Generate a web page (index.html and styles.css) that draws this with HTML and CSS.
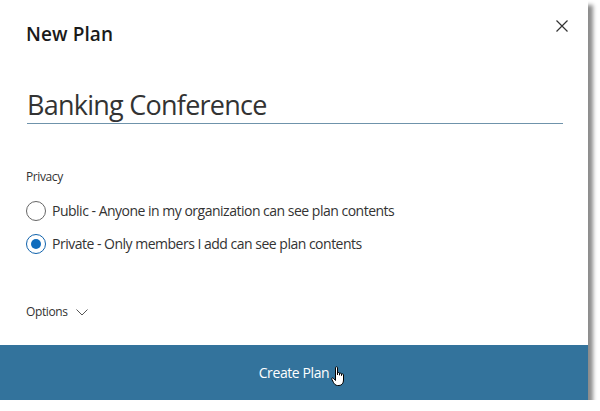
FILE: index.html
```html
<!DOCTYPE html>
<html>
<head>
<meta charset="utf-8">
<link rel="stylesheet" href="styles.css">
</head>
<body>
<div class="dialog">
  <div class="body">
    <div class="header">
      <h1 class="title">New Plan</h1>
      <button class="close" aria-label="Close">
        <svg width="12" height="12" viewBox="0 0 12 12"><path d="M0.5 0.5 L11.5 11.5 M11.5 0.5 L0.5 11.5" stroke="#333" stroke-width="1.2" fill="none"/></svg>
      </button>
    </div>
    <div class="name-field">Banking Conference</div>
    <div class="label">Privacy</div>
    <div class="radios">
      <label class="radio"><span class="circle"></span><span>Public - Anyone in my organization can see plan contents</span></label>
      <label class="radio"><span class="circle checked"></span><span>Private - Only members I add can see plan contents</span></label>
    </div>
    <div class="options">Options
      <svg class="chev" width="12" height="7" viewBox="0 0 12 7"><path d="M0.5 0.5 L6 6 L11.5 0.5" stroke="#555" stroke-width="1" fill="none"/></svg>
    </div>
  </div>
  <div class="footer">
    <span class="create">Create Plan</span>
    <svg class="cursor" width="16" height="22" viewBox="0 0 16 22">
      <path d="M4.5 1.5 C4.5 0.6 6.5 0.6 6.5 1.5 L6.5 9 L6.5 7.2 C6.5 6.3 8.5 6.3 8.5 7.2 L8.5 9.2 L8.5 7.8 C8.5 6.9 10.5 6.9 10.5 7.8 L10.5 9.6 L10.5 8.6 C10.5 7.7 12.5 7.7 12.5 8.6 L12.5 14 C12.5 17 11 19.5 8 19.5 L6.5 19.5 C4.5 19.5 3.5 18 2.5 16.5 L0.8 13.2 C0.3 12.3 1.5 11.4 2.3 12.2 L4.5 14.5 Z" fill="#fff" stroke="#000" stroke-width="1"/>
    </svg>
  </div>
</div>
</body>
</html>
```
FILE: styles.css
```css
* { box-sizing: border-box; }
html, body { margin: 0; padding: 0; background: #fff; }
body { font-family: "Open Sans", "Noto Sans", sans-serif; color: #333; }
.dialog {
  width: 588px;
  height: 400px;
  background: #fff;
  display: flex;
  flex-direction: column;
  box-shadow: 5px 5px 4px rgba(0,0,0,0.45);
}
.body {
  flex: 1;
  padding: 0 26px;
  display: flex;
  flex-direction: column;
}
.header {
  display: flex;
  justify-content: space-between;
  align-items: flex-start;
  height: 66px;
}
.title {
  margin: 21px 0 0;
  font-size: 19px;
  font-weight: 600;
  color: #1a1a1a;
  letter-spacing: 0.1px;
}
.close {
  margin: 20px -6px 0 0;
  background: none;
  border: 0;
  padding: 0;
  width: 12px;
  height: 12px;
  display: flex;
}
.name-field {
  margin-top: 21px;
  font-size: 27px;
  letter-spacing: -0.75px;
  color: #333;
  line-height: 36px;
  border-bottom: 1px solid #6f93ab;
  width: 536px;
  margin-left: 1px;
}
.label {
  margin-top: 45px;
  font-size: 12px;
  letter-spacing: -0.4px;
  line-height: 16px;
  color: #333;
}
.radios {
  margin-top: 16px;
  display: flex;
  flex-direction: column;
  gap: 13px;
}
.radio {
  display: flex;
  align-items: center;
  gap: 6px;
  font-size: 14px;
  letter-spacing: -0.5px;
  line-height: 20px;
  color: #333;
}
.circle {
  width: 20px;
  height: 20px;
  border-radius: 50%;
  border: 1px solid #666;
  background: #fff;
  flex: none;
  position: relative;
}
.circle.checked {
  border-color: #0f62ac;
}
.circle.checked::after {
  content: "";
  position: absolute;
  left: 4px; top: 4px;
  width: 10px; height: 10px;
  border-radius: 50%;
  background: #0f6cbd;
}
.options {
  margin-top: 50px;
  font-size: 12px;
  letter-spacing: -0.4px;
  line-height: 16px;
  display: flex;
  align-items: center;
  gap: 9px;
}
.footer {
  height: 55px;
  background: #33739c;
  display: flex;
  align-items: center;
  justify-content: center;
  position: relative;
}
.create {
  color: #fff;
  font-size: 14px;
  letter-spacing: -0.4px;
}
.cursor {
  position: absolute;
  left: 331px;
  top: 21px;
}
```
